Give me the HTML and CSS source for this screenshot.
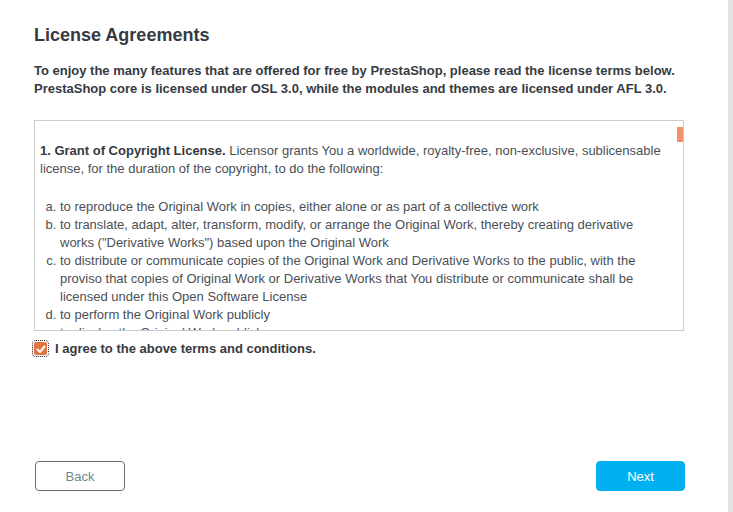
FILE: index.html
```html
<!DOCTYPE html>
<html lang="en">
<head>
  <meta charset="UTF-8" />
  <title>License Agreements</title>
  <link rel="stylesheet" href="styles.css">
</head>
<body>
  <div class="page">
    <div class="content">
      <h2>License Agreements</h2>
      <p class="intro">To enjoy the many features that are offered for free by PrestaShop, please read the license terms below. PrestaShop core is licensed under OSL 3.0, while the modules and themes are licensed under AFL 3.0.</p>

      <div class="license">
        <div class="license-text">
          <p><strong>1. Grant of Copyright License.</strong> Licensor grants You a worldwide, royalty-free, non-exclusive, sublicensable license, for the duration of the copyright, to do the following:</p>
          <ol>
            <li>to reproduce the Original Work in copies, either alone or as part of a collective work</li>
            <li>to translate, adapt, alter, transform, modify, or arrange the Original Work, thereby creating derivative works ("Derivative Works") based upon the Original Work</li>
            <li>to distribute or communicate copies of the Original Work and Derivative Works to the public, with the proviso that copies of Original Work or Derivative Works that You distribute or communicate shall be licensed under this Open Software License</li>
            <li>to perform the Original Work publicly</li>
            <li>to display the Original Work publicly</li>
          </ol>
        </div>
        <div class="thumb"></div>
      </div>

      <label class="agree">
        <span class="check">
          <svg width="10" height="8" viewBox="0 0 10 8"><path d="M1 4 L4 7 L9 1" fill="none" stroke="#fff" stroke-width="2"/></svg>
        </span>
        I agree to the above terms and conditions.
      </label>
    </div>

    <div class="buttons">
      <button class="btn back">Back</button>
      <button class="btn next">Next</button>
    </div>
  </div>
  <div class="edge"></div>
</body>
</html>
```

FILE: styles.css
```css
html, body {
  margin: 0;
  height: 100%;
}

body {
  font-family: "Liberation Sans", Arial, sans-serif;
  background: #fff;
  color: #363a41;
  display: flex;
}

.page {
  flex: 1;
  padding: 0 44px 0 34px;
  display: flex;
  flex-direction: column;
  height: 512px;
  box-sizing: border-box;
}

h2 {
  margin: 24px 0 0;
  font-size: 18px;
  font-weight: bold;
  line-height: 22px;
  color: #363a41;
}

.intro {
  margin: 16px 0 0;
  font-size: 13px;
  font-weight: bold;
  line-height: 18px;
}

.license {
  margin-top: 22px;
  height: 211px;
  border: 1px solid #ccc;
  box-sizing: border-box;
  position: relative;
  overflow: hidden;
}

.license-text {
  padding: 21px 18px 0 5px;
  font-size: 13px;
  line-height: 18px;
  color: #4b4f56;
}

.license-text p {
  margin: 0 0 20px;
}

.license-text strong {
  color: #363a41;
}

.license-text ol {
  list-style: lower-alpha;
  margin: 0;
  padding-left: 20px;
}

.thumb {
  position: absolute;
  top: 6px;
  right: 0;
  width: 6px;
  height: 15px;
  background: #f4906b;
}

.agree {
  margin-top: 10px;
  display: flex;
  align-items: center;
  gap: 8px;
  font-size: 13px;
  font-weight: bold;
}

.check {
  width: 13px;
  height: 13px;
  background: #e5733f;
  border-radius: 2px;
  display: flex;
  align-items: center;
  justify-content: center;
  outline: 1px dotted #222;
  outline-offset: 1px;
}

.buttons {
  margin-top: auto;
  margin-bottom: 21px;
  display: flex;
  justify-content: space-between;
}

.btn {
  height: 30px;
  border-radius: 4px;
  font-family: inherit;
  font-size: 13px;
}

.back {
  width: 90px;
  margin-left: 1px;
  background: #fff;
  border: 1px solid #6c6c6c;
  color: #6c868e;
}

.next {
  width: 89px;
  margin-right: -1px;
  background: #00b0f0;
  border: 1px solid #00b0f0;
  color: #fff;
}

.edge {
  width: 5px;
  background: #e2e2e2;
}
```
